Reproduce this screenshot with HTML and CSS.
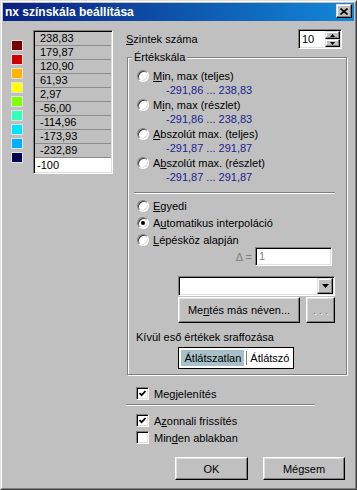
FILE: index.html
```html
<!DOCTYPE html>
<html lang="hu">
<head>
    <meta charset="UTF-8">
    <title>nx színskála beállítása</title>
    <link rel="stylesheet" href="styles.css">
</head>
<body>
    <div class="window">
        <div class="frame">
            <div class="titlebar">
                <span class="title">nx színskála beállítása</span>
                <button class="close">
                    <svg width="8" height="7" viewBox="0 0 8 7"><path d="M0.5 0.5 L7.5 6.5 M7.5 0.5 L0.5 6.5" stroke="#000" stroke-width="1.6" fill="none"/></svg>
                </button>
            </div>

            <div class="client">
                <div class="swatches">
                    <span class="swatch c1"></span>
                    <span class="swatch c2"></span>
                    <span class="swatch c3"></span>
                    <span class="swatch c4"></span>
                    <span class="swatch c5"></span>
                    <span class="swatch c6"></span>
                    <span class="swatch c7"></span>
                    <span class="swatch c8"></span>
                    <span class="swatch c9"></span>
                </div>

                <div class="levels">
                    <div class="level">238,83</div>
                    <div class="level">179,87</div>
                    <div class="level">120,90</div>
                    <div class="level">61,93</div>
                    <div class="level">2,97</div>
                    <div class="level">-56,00</div>
                    <div class="level">-114,96</div>
                    <div class="level">-173,93</div>
                    <div class="level">-232,89</div>
                    <div class="level level-edit">-100</div>
                </div>

                <div class="settings">
                    <div class="count">
                        <span><u>S</u>zintek száma</span>
                        <div class="spin">
                            <span class="spin-val">10</span>
                            <div class="spin-btns">
                                <span class="spin-btn"><svg width="5" height="3" viewBox="0 0 5 3"><path d="M2.5 0 L5 3 L0 3 Z" fill="#000"/></svg></span>
                                <span class="spin-btn"><svg width="5" height="3" viewBox="0 0 5 3"><path d="M0 0 L5 0 L2.5 3 Z" fill="#000"/></svg></span>
                            </div>
                        </div>
                    </div>

                    <div class="group">
                        <span class="legend">Értékskála</span>

                        <div class="opts">
                            <div class="opt"><span class="radio"></span><span><u>M</u>in, max (teljes)</span></div>
                            <div class="range">-291,86 ... 238,83</div>
                            <div class="opt"><span class="radio"></span><span>M<u>i</u>n, max (részlet)</span></div>
                            <div class="range">-291,86 ... 238,83</div>
                            <div class="opt"><span class="radio"></span><span><u>A</u>bszolút max. (teljes)</span></div>
                            <div class="range">-291,87 ... 291,87</div>
                            <div class="opt"><span class="radio"></span><span>A<u>b</u>szolút max. (részlet)</span></div>
                            <div class="range">-291,87 ... 291,87</div>
                        </div>

                        <div class="rule"></div>

                        <div class="modes">
                            <div class="opt"><span class="radio"></span><span><u>E</u>gyedi</span></div>
                            <div class="opt"><span class="radio on"></span><span>A<u>u</u>tomatikus interpoláció</span></div>
                            <div class="opt"><span class="radio"></span><span><u>L</u>épésköz alapján</span></div>
                        </div>

                        <div class="delta">
                            <span>Δ =</span>
                            <span class="field">1</span>
                        </div>

                        <div class="combo">
                            <span class="combo-btn"><svg width="7" height="4" viewBox="0 0 7 4"><path d="M0 0 L7 0 L3.5 4 Z" fill="#000"/></svg></span>
                        </div>

                        <div class="actions">
                            <button class="btn btn-save">Me<u>n</u>tés más néven...</button>
                            <button class="btn btn-more">...</button>
                        </div>

                        <div class="note">Kívül eső értékek sraffozása</div>

                        <div class="seg">
                            <span class="seg-on">Átlátszatlan</span>
                            <span class="seg-div"></span>
                            <span class="seg-off">Átlátszó</span>
                        </div>
                    </div>

                    <div class="check-row first">
                        <span class="checkbox"><svg width="7" height="7" viewBox="0 0 7 7"><path d="M0.5 3 L2.6 5.2 L6.5 1" stroke="#000" stroke-width="1.7" fill="none"/></svg></span>
                        <span>Me<u>g</u>jelenítés</span>
                    </div>

                    <div class="sep"></div>

                    <div class="check-row after-sep">
                        <span class="checkbox"><svg width="7" height="7" viewBox="0 0 7 7"><path d="M0.5 3 L2.6 5.2 L6.5 1" stroke="#000" stroke-width="1.7" fill="none"/></svg></span>
                        <span>A<u>z</u>onnali frissítés</span>
                    </div>
                    <div class="check-row">
                        <span class="checkbox"></span>
                        <span>Min<u>d</u>en ablakban</span>
                    </div>

                    <div class="buttons">
                        <button class="btn btn-ok">OK</button>
                        <button class="btn btn-cancel">Mégsem</button>
                    </div>
                </div>
            </div>
        </div>
    </div>
</body>
</html>
```

FILE: styles.css
```css
body {
    margin: 0;
    font-family: "Liberation Sans", Arial, sans-serif;
    font-size: 11px;
    color: #000;
}
.window {
    width: 357px;
    height: 490px;
    box-sizing: border-box;
    border: 1px solid;
    border-color: #dfdfdf #404040 #404040 #dfdfdf;
    background: #c0c0c0;
}
.frame {
    height: 100%;
    box-sizing: border-box;
    border: 1px solid;
    border-color: #fff #808080 #808080 #fff;
    padding: 1px;
}
.titlebar {
    height: 18px;
    box-sizing: border-box;
    display: flex;
    justify-content: space-between;
    align-items: flex-start;
    padding: 1px 2px 0 2px;
    background: linear-gradient(to right, #0a2080, #1288d8);
}
.title {
    color: #fff;
    font-weight: bold;
    font-size: 12px;
    line-height: 16px;
}
.close {
    width: 16px;
    height: 14px;
    padding: 0;
    display: flex;
    align-items: center;
    justify-content: center;
    background: #c0c0c0;
    border: 1px solid;
    border-color: #dfdfdf #000 #000 #dfdfdf;
    box-shadow: inset -1px -1px #808080, inset 1px 1px #fff;
}

/* raised / sunken helpers */
.spin-btn,
.combo-btn {
    background: #c0c0c0;
    border: 1px solid;
    border-color: #dfdfdf #000 #000 #dfdfdf;
    box-shadow: inset -1px -1px #808080, inset 1px 1px #fff;
    box-sizing: border-box;
    display: flex;
    align-items: center;
    justify-content: center;
}
.levels,
.spin,
.field,
.combo,
.checkbox {
    box-sizing: border-box;
    border: 1px solid;
    border-color: #808080 #fff #fff #808080;
    box-shadow: inset 1px 1px #000, inset -1px -1px #dfdfdf;
    padding: 1px;
}

.client {
    display: flex;
    padding-left: 8px;
}
.swatches {
    display: flex;
    flex-direction: column;
    gap: 3px;
    margin-top: 19px;
}
.swatch {
    width: 10px;
    height: 9px;
    border: 1px solid #e0e0e0;
}
.c1 { background: #7a0000; }
.c2 { background: #cc0000; }
.c3 { background: #ffb400; }
.c4 { background: #ffff00; }
.c5 { background: #80ff00; }
.c6 { background: #33ffbb; }
.c7 { background: #00e5ff; }
.c8 { background: #00b0ff; }
.c9 { background: #000050; }

.levels {
    margin: 9px 0 0 10px;
    width: 80px;
    height: 144px;
}
.level {
    height: 14px;
    box-sizing: border-box;
    border-bottom: 1px solid #8c8c8c;
    padding-left: 5px;
    line-height: 13px;
}
.level-edit {
    background: #fff;
    border-bottom: 0;
    padding-left: 2px;
    line-height: 14px;
}

.settings {
    margin-left: 13px;
    width: 221px;
}
.count {
    display: flex;
    justify-content: space-between;
    align-items: center;
    height: 20px;
    margin-top: 8px;
    padding-right: 5px;
}
.spin {
    width: 44px;
    height: 20px;
    display: flex;
    background: #fff;
}
.spin-val {
    flex: 1;
    padding-left: 2px;
    line-height: 16px;
}
.spin-btns {
    width: 15px;
    display: flex;
    flex-direction: column;
}
.spin-btn {
    height: 8px;
}

.group {
    margin: 8px 0 0 1px;
    border: 1px solid #808080;
    box-shadow: 1px 1px #fff, inset 1px 1px #fff;
    padding: 0 11px 5px 9px;
    display: flex;
    flex-direction: column;
}
.legend {
    align-self: flex-start;
    margin: -7px 0 0 -5px;
    padding: 0 2px;
    background: #c0c0c0;
    line-height: 13px;
}
.opts {
    margin-top: 5px;
}
.opt {
    display: flex;
    align-items: center;
    gap: 4px;
    height: 14px;
}
.radio {
    width: 12px;
    height: 12px;
    flex-shrink: 0;
    box-sizing: border-box;
    border-radius: 50%;
    background: #fff;
    border: 1px solid;
    border-color: #808080 #fff #fff #808080;
    box-shadow: inset 1px 1px #404040, inset -1px -1px #dfdfdf;
    display: flex;
    align-items: center;
    justify-content: center;
}
.radio.on::after {
    content: "";
    width: 4px;
    height: 4px;
    border-radius: 50%;
    background: #000;
}
.range {
    height: 15px;
    line-height: 15px;
    padding-left: 29px;
    color: #202090;
}
.rule {
    margin: 7px 0 0 -3px;
    border-top: 1px solid #808080;
    border-bottom: 1px solid #fff;
}
.modes {
    margin-top: 3px;
}
.modes .opt {
    height: 17px;
}
.delta {
    display: flex;
    justify-content: flex-end;
    align-items: center;
    gap: 3px;
    margin-top: -1px;
    padding-right: 3px;
    color: #808080;
}
.field {
    width: 77px;
    height: 19px;
    background: #fff;
    padding: 1px 3px;
    line-height: 15px;
}
.combo {
    margin: 10px 0 0 41px;
    height: 20px;
    background: #fff;
    display: flex;
    justify-content: flex-end;
}
.combo-btn {
    width: 16px;
    height: 16px;
}
.actions {
    display: flex;
    justify-content: flex-end;
    gap: 6px;
    margin-top: 1px;
}
.btn {
    font: inherit;
    color: #000;
    padding: 0;
    background: #c0c0c0;
    border: 1px solid;
    border-color: #fff #000 #000 #fff;
    box-shadow: inset -1px -1px #808080, inset 1px 1px #dfdfdf;
}
.btn-save {
    width: 122px;
    height: 26px;
}
.btn-more {
    width: 29px;
    height: 26px;
    color: #808080;
    text-shadow: 1px 1px #fff;
    letter-spacing: 3px;
    padding-left: 3px;
}
.note {
    margin: 8px 0 0 -1px;
    line-height: 13px;
}
.seg {
    align-self: center;
    margin-top: 3px;
    display: flex;
    border: 1px solid #000;
    padding: 2px;
    background: #fff;
    line-height: 16px;
}
.seg-on {
    background: #a8c0c8;
    padding: 0 3px;
}
.seg-div {
    width: 1px;
    margin: 1px 3px 1px 2px;
    background: #808080;
}
.seg-off {
    padding-right: 1px;
}

.check-row {
    display: flex;
    align-items: center;
    gap: 5px;
    height: 17px;
    margin-left: 10px;
}
.check-row.first {
    margin-top: 10px;
}
.check-row.after-sep {
    margin-top: 6px;
}
.checkbox {
    width: 13px;
    height: 13px;
    background: #fff;
    display: flex;
    align-items: center;
    justify-content: center;
}
.sep {
    margin-top: 2px;
    width: 189px;
    border-top: 1px solid #808080;
    border-bottom: 1px solid #fff;
}
.buttons {
    display: flex;
    justify-content: flex-end;
    gap: 15px;
    margin-top: 11px;
    padding-right: 2px;
}
.btn-ok {
    width: 73px;
    height: 23px;
}
.btn-cancel {
    width: 82px;
    height: 23px;
}
```
